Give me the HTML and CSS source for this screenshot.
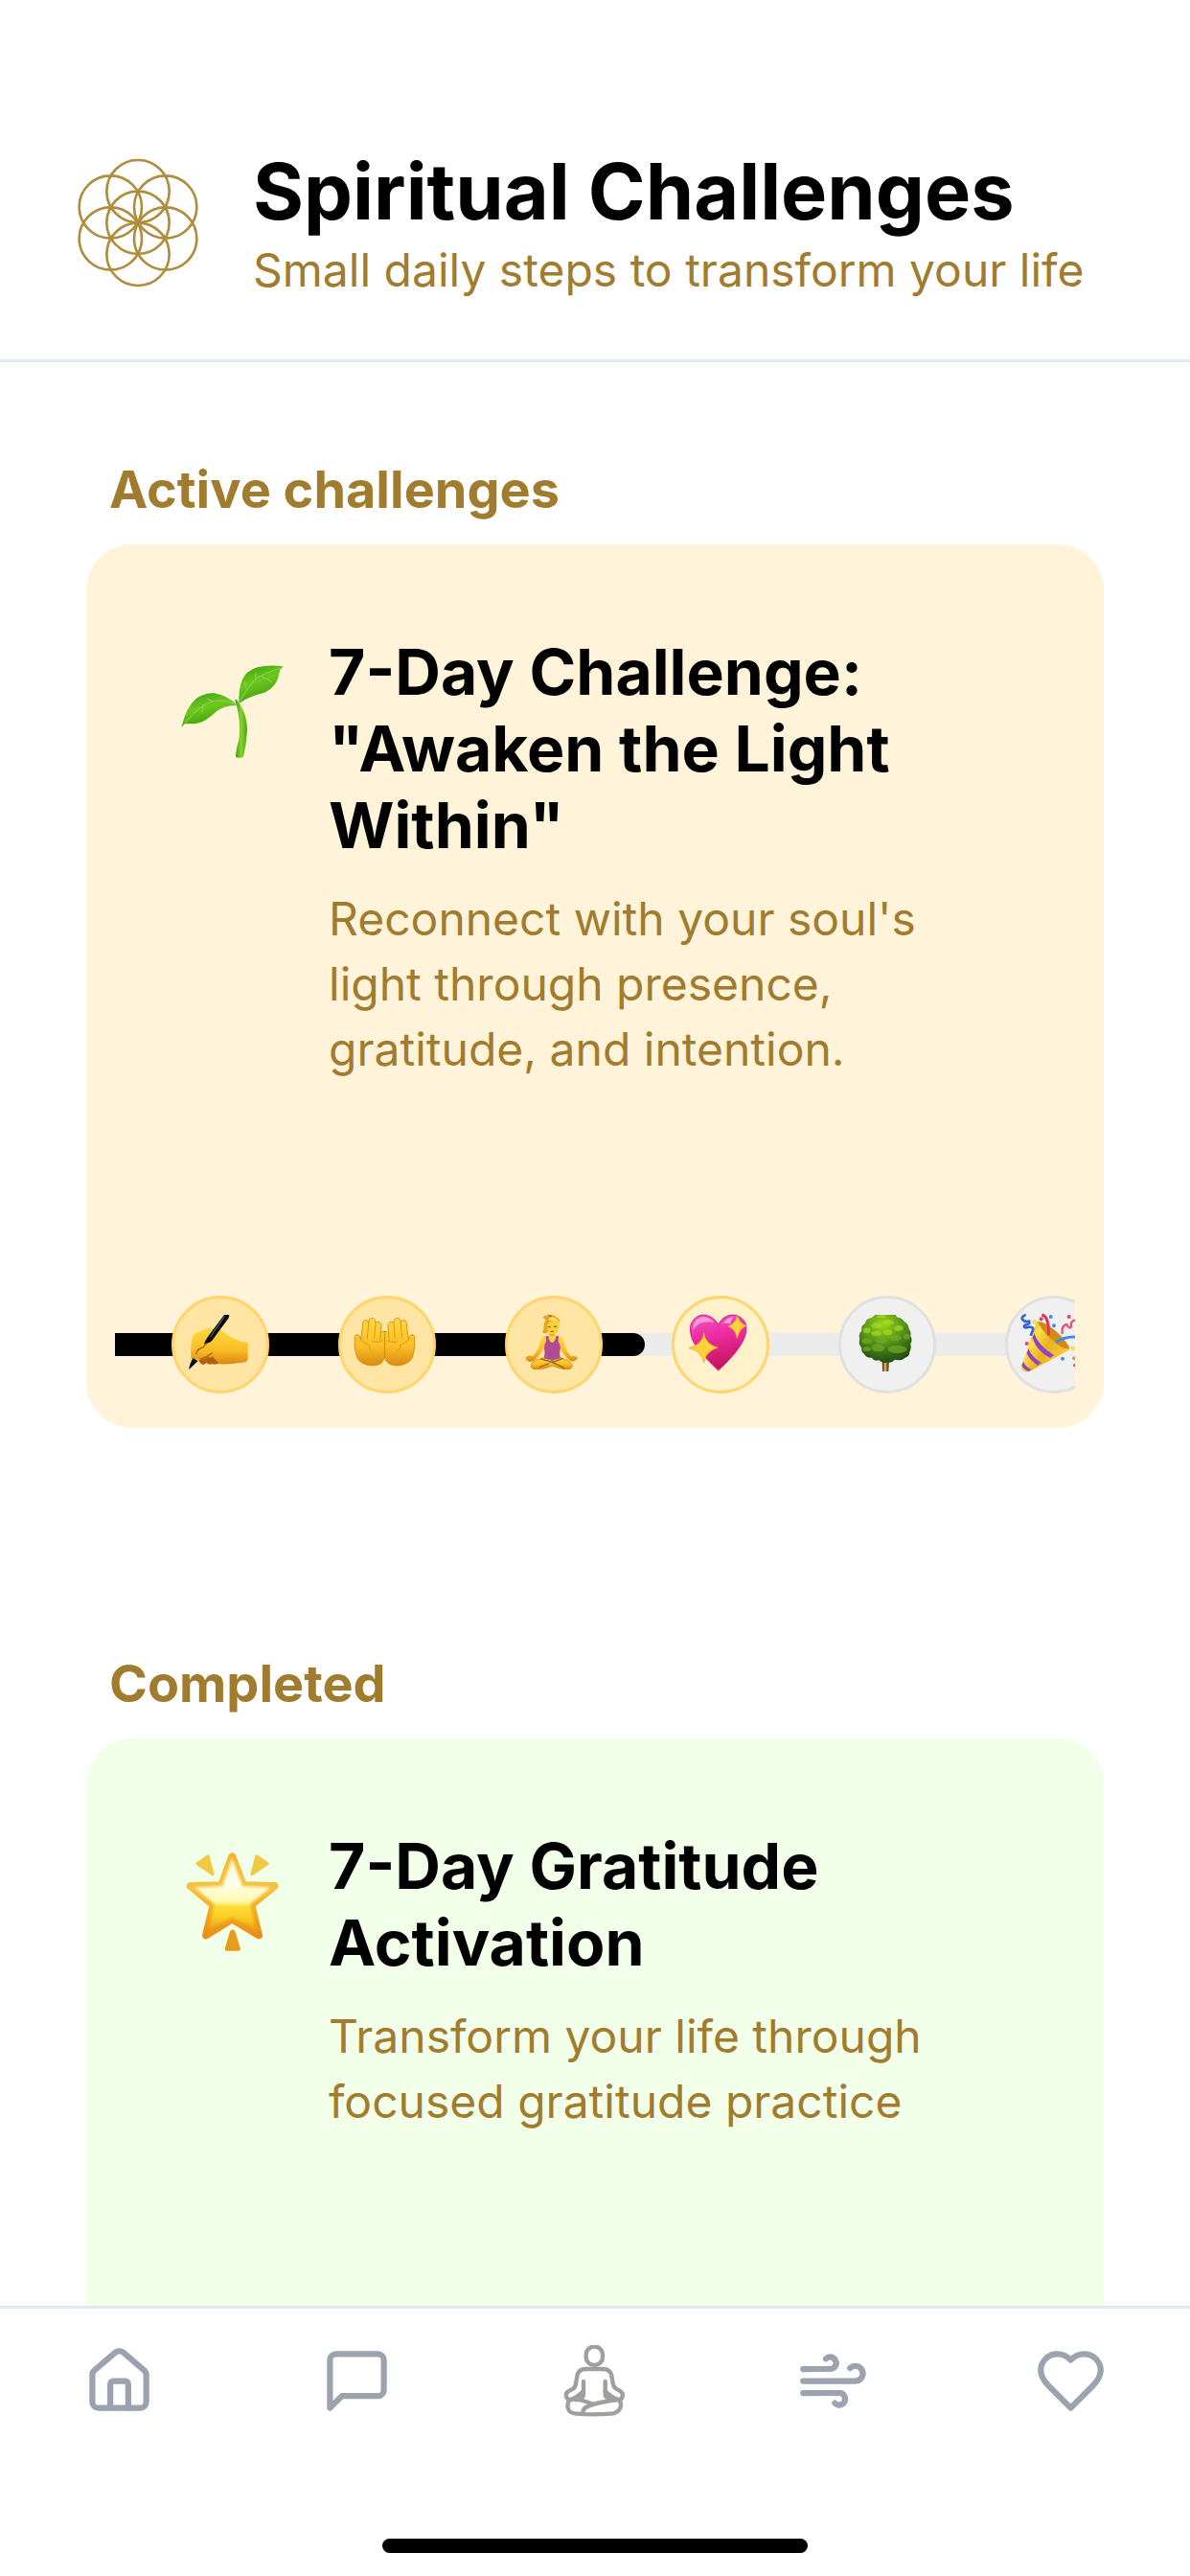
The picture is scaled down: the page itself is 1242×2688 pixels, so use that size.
FILE: index.html
```html
<!DOCTYPE html>
<html lang="en">
<head>
  <meta charset="UTF-8" />
  <meta name="viewport" content="width=device-width, initial-scale=1" />
  <title>Spiritual Challenges</title>
  <link rel="stylesheet" href="styles.css">
</head>
<body>
  <header class="header">
    <svg class="logo" viewBox="60 64 384 416" aria-hidden="true">
      <circle cx="252" cy="272" r="98" />
      <circle cx="252" cy="174" r="98" />
      <circle cx="252" cy="371" r="98" />
      <circle cx="166" cy="223" r="98" />
      <circle cx="338" cy="223" r="98" />
      <circle cx="166" cy="322" r="98" />
      <circle cx="338" cy="322" r="98" />
    </svg>
    <div class="header-text">
      <h1>Spiritual Challenges</h1>
      <p>Small daily steps to transform your life</p>
    </div>
  </header>

  <main class="content">
    <section>
      <h2>Active challenges</h2>
      <article class="card active">
        <div class="card-body">
          <!-- Seedling -->
          <svg class="card-icon" viewBox="48 45 342 342" aria-hidden="true">
            <defs>
              <linearGradient id="leaf" x1="0" y1="0" x2="0.4" y2="1">
                <stop offset="0" stop-color="#3f9d12" />
                <stop offset="0.5" stop-color="#6cc81c" />
                <stop offset="1" stop-color="#3f9a10" />
              </linearGradient>
              <linearGradient id="stem">
                <stop offset="0" stop-color="#3f960c" />
                <stop offset="0.5" stop-color="#83d42c" />
                <stop offset="1" stop-color="#4da512" />
              </linearGradient>
            </defs>
            <path fill="url(#stem)" d="M226 182Q230 176 234 184Q264 224 264 278Q261 320 252 359Q240 366 228 359Q228 340 238 306Q246 244 226 182Z" />
            <path fill="url(#leaf)" d="M58 268Q72 204 104 177Q132 157 162 160Q202 168 229 194L228 199Q194 198 169 216Q129 254 102 255Q78 256 68 256Z" />
            <path fill="url(#leaf)" d="M239 192Q234 126 264 95Q298 67 377 76L366 88Q360 140 318 158Q264 172 239 192Z" />
            <path class="vein" d="M226 195Q190 178 156 185Q112 200 70 252M122 220L126 195M156 185L138 177M242 184Q268 138 290 116Q316 98 366 82M290 116L291 98M262 146L255 123M310 108L342 125" />
          </svg>
          <div>
            <h3>7-Day Challenge: "Awaken the Light Within"</h3>
            <p>Reconnect with your soul's light through presence, gratitude, and intention.</p>
          </div>
        </div>

        <div class="track">
          <div class="track-fill"></div>
          <ol class="days">
            <!-- Writing hand -->
            <li class="day done">
              <svg viewBox="246 105 288 288" aria-hidden="true">
                <defs>
                  <linearGradient id="skin" x1="0" y1="0" x2="0" y2="1">
                    <stop offset="0" stop-color="#ffd840" />
                    <stop offset="0.6" stop-color="#fbbd25" />
                    <stop offset="1" stop-color="#d98a12" />
                  </linearGradient>
                </defs>
                <path fill="#b5620f" d="M318 280Q322 308 334 312Q344 312 346 306Q354 314 364 310Q376 314 388 307L420 300L400 270Z" />
                <path fill="url(#skin)" d="M298 288Q295 240 306 220Q326 202 356 198Q384 196 404 212Q438 240 476 243V298Q470 306 458 305Q420 312 386 310Q372 292 354 288Q330 300 314 294L310 300Q300 298 298 288Z" />
                <path fill="none" stroke="#a9620f" stroke-width="4" stroke-linecap="round" d="M314 278Q318 262 336 258L346 246M330 294Q352 286 364 276M330 294L338 308M348 290L360 306M364 288L380 305" />
                <path fill="#0a0a0e" d="M402 156L417 156Q419 160 415 167L363 238Q355 246 344 245L338 248Q346 232 350 226ZM304 292L320 300L292 327Q292 314 304 292Z" />
                <path fill="none" stroke="#6d7690" stroke-width="3" d="M402 162L358 226" />
              </svg>
            </li>
            <!-- Palms up together -->
            <li class="day done">
              <svg viewBox="768 105 288 288" aria-hidden="true">
                <g id="palm">
                  <path fill="url(#skin)" stroke="#d7920f" stroke-width="3" stroke-linejoin="round" d="M811 224Q813 216 822 219Q828 222 830 234L837 178Q841 170 849 174Q853 176 854 182L856 171Q861 164 870 167Q876 170 876 181Q880 176 888 179Q894 182 894 190L892 214Q896 206 904 208V290Q898 314 866 315Q836 314 820 294Q809 270 811 224Z" />
                  <path fill="none" stroke="#db9a15" stroke-width="3" stroke-linecap="round" d="M854 182L850 230M876 182L872 230M892 214L890 236M830 234Q832 240 858 252Q850 258 862 266M866 240Q886 244 898 238" />
                </g>
                <use href="#palm" transform="matrix(-1 0 0 1 1809 0)" />
              </svg>
            </li>
            <!-- Woman in lotus position -->
            <li class="day done">
              <svg viewBox="210 105 288 288" aria-hidden="true">
                <path fill="#e9a91c" d="M340 205H356V224H340Z" />
                <path fill="url(#skin)" d="M330 222Q317 224 313 236Q306 266 288 286Q274 280 266 290Q264 296 276 302Q290 306 298 294Q316 276 328 252H368Q380 276 398 294Q408 306 420 300Q430 294 428 288Q420 284 408 286Q390 266 384 236Q380 224 366 222Z" />
                <path fill="url(#skin)" stroke="#b87410" stroke-width="2" d="M322 290Q290 298 283 312Q282 324 294 326Q322 328 350 315Q380 328 400 326Q414 324 411 312Q404 298 374 290Z" />
                <path fill="none" stroke="#a7660d" stroke-width="4" stroke-linecap="round" d="M314 294Q348 302 386 322M382 293L354 303M338 309L310 319" />
                <path fill="#3c8fd0" d="M342 297L357 294L350 304Z" />
                <path fill="#b04c93" d="M329 222H337Q340 242 349 243Q358 242 361 222H369L368 240Q376 250 374 264Q370 280 375 292Q350 302 323 292Q328 276 324 262Q322 250 330 240Z" />
                <ellipse cx="349" cy="190" rx="22" ry="27" fill="#ffcf35" />
                <path fill="#e2a51d" d="M320 164Q326 154 348 156Q374 162 374 186Q372 176 358 172Q336 178 332 190Q336 204 334 213Q324 216 317 210Q324 206 322 196Q324 186 324 180Q334 174 320 164Z" />
                <path fill="#ffe25c" d="M340 166Q358 158 370 178Q354 170 338 174Z" />
                <path fill="none" stroke="#72460b" stroke-width="3" stroke-linecap="round" d="M336 193L343 195M355 194L362 192M345 208H352" />
                <path fill="#a65484" d="M336 157Q344 153 348 162L340 161Z" />
              </svg>
            </li>
            <!-- Sparkling heart -->
            <li class="day current">
              <svg viewBox="732 105 288 288" aria-hidden="true">
                <defs>
                  <linearGradient id="heart" x1="0" y1="0" x2="0.2" y2="1">
                    <stop offset="0" stop-color="#f25bbd" />
                    <stop offset="0.4" stop-color="#ee2ea6" />
                    <stop offset="1" stop-color="#c8145e" />
                  </linearGradient>
                </defs>
                <path fill="url(#heart)" stroke="#dc1590" stroke-width="3" d="M869 330Q812 276 792 242Q776 210 784 184Q796 158 822 156Q852 158 869 186Q884 158 914 156Q942 158 954 182Q962 210 944 242Q922 282 869 330Z" />
                <path fill="#fbb5e2" opacity=".75" d="M790 190Q796 166 822 162Q846 166 856 180Q840 176 820 180Q804 182 790 204ZM884 182Q896 164 916 162L906 184Z" />
                <path class="spark" d="M824 212Q829 248 868 259Q831 268 824 306Q817 269 777 260Q818 250 824 212ZM929 157Q933 182 957 190Q934 200 928 231Q923 200 899 192Q923 184 929 157Z" />
              </svg>
            </li>
            <!-- Tree -->
            <li class="day">
              <svg viewBox="174 105 288 288" aria-hidden="true">
                <defs>
                  <radialGradient id="crown" cx="0.45" cy="0.2" r="0.8">
                    <stop offset="0" stop-color="#9bd41b" />
                    <stop offset="0.5" stop-color="#57921a" />
                    <stop offset="1" stop-color="#1f4d13" />
                  </radialGradient>
                </defs>
                <path fill="#6a4a20" d="M302 296H324L322 333H303Z" />
                <path fill="#d2ac55" d="M308 304H316V333H308Z" />
                <path fill="url(#crown)" d="M280 156H344L350 164Q364 164 372 178Q384 184 386 200Q394 210 391 222Q399 236 391 246Q394 262 388 272Q388 286 374 290Q366 298 354 298L342 296Q332 308 318 304Q304 310 292 298Q276 302 270 290Q252 292 246 278Q236 272 238 260Q226 244 232 230Q226 216 238 206Q234 190 248 184Q252 166 268 166Z" />
                <g fill="#a5df20" opacity=".65">
                  <ellipse cx="284" cy="190" rx="16" ry="9" />
                  <ellipse cx="322" cy="180" rx="17" ry="9" />
                  <ellipse cx="300" cy="161" rx="14" ry="5" />
                  <ellipse cx="354" cy="198" rx="14" ry="9" />
                  <ellipse cx="284" cy="214" rx="16" ry="8" />
                  <ellipse cx="320" cy="211" rx="14" ry="9" />
                  <ellipse cx="254" cy="205" rx="11" ry="9" />
                </g>
                <g fill="#70ad20" opacity=".7">
                  <ellipse cx="254" cy="238" rx="16" ry="9" />
                  <ellipse cx="300" cy="236" rx="18" ry="9" />
                  <ellipse cx="345" cy="228" rx="17" ry="10" />
                  <ellipse cx="379" cy="224" rx="10" ry="9" />
                  <ellipse cx="289" cy="259" rx="20" ry="12" />
                  <ellipse cx="350" cy="264" rx="30" ry="12" />
                  <ellipse cx="254" cy="263" rx="12" ry="7" />
                </g>
              </svg>
            </li>
            <!-- Party popper -->
            <li class="day">
              <svg viewBox="696 105 288 288" aria-hidden="true">
                <defs>
                  <linearGradient id="cone" x1="0" y1="0" x2="1" y2="0.6">
                    <stop offset="0" stop-color="#c98a12" />
                    <stop offset="0.35" stop-color="#ffdf4a" />
                    <stop offset="0.6" stop-color="#eab020" />
                    <stop offset="1" stop-color="#f7cf3e" />
                  </linearGradient>
                </defs>
                <path fill="url(#cone)" d="M786 178Q796 172 820 188Q868 220 888 256Q892 266 882 269L764 333Q748 338 739 326Q737 318 740 312Z" />
                <path fill="#d48a17" d="M790 178Q806 176 838 200Q880 236 889 262Q868 268 832 232Q796 200 790 178Z" />
                <path fill="#8f44c4" d="M778 214Q792 254 840 282L828 291Q786 270 773 229ZM760 262Q772 290 800 306L789 314Q764 298 755 277ZM744 302Q752 320 770 327L760 333Q744 326 739 314Z" />
                <path fill="none" stroke="#e2315f" stroke-width="9" d="M802 156Q826 162 823 220" />
                <path fill="none" stroke="#3d8cf0" stroke-width="9" d="M846 243Q872 222 920 226" />
                <path fill="none" stroke="#3366d0" stroke-width="8" d="M752 156Q736 162 742 171Q750 180 762 176Q768 186 750 188Q742 194 752 196Q778 190 774 204L767 221" />
                <path fill="none" stroke="#e5567c" stroke-width="7" d="M867 216Q862 190 880 186Q888 202 894 194Q890 174 910 172" />
                <g fill="#3d8cf0"><circle cx="830" cy="162" r="6" /><circle cx="840" cy="190" r="6" /><circle cx="867" cy="293" r="6" /></g>
                <g fill="#e5406b"><circle cx="800" cy="169" r="6" /><circle cx="887" cy="162" r="6" /><circle cx="755" cy="246" r="6" /><circle cx="905" cy="314" r="5" /></g>
                <g fill="#f6e73d" stroke="#d9b91d" stroke-width="1"><circle cx="779" cy="178" r="6" /><circle cx="899" cy="261" r="6" /></g>
                <circle cx="903" cy="292" r="6" fill="#f39a23" />
              </svg>
            </li>
          </ol>
        </div>
      </article>
    </section>

    <section>
      <h2>Completed</h2>
      <article class="card completed">
        <div class="card-body">
          <!-- Glowing star -->
          <svg class="card-icon" viewBox="48 93 342 342" aria-hidden="true">
            <defs>
              <linearGradient id="star" x1="0" y1="0" x2="0" y2="1">
                <stop offset="0" stop-color="#f5b52a" />
                <stop offset="0.4" stop-color="#f4c343" />
                <stop offset="0.7" stop-color="#f3aa1c" />
                <stop offset="1" stop-color="#e8901a" />
              </linearGradient>
              <linearGradient id="shine" x1="0" y1="0" x2="0" y2="1">
                <stop offset="0" stop-color="#fff8d0" />
                <stop offset="0.35" stop-color="#fffef0" />
                <stop offset="0.63" stop-color="#fff9a8" />
                <stop offset="0.66" stop-color="#fbe23c" />
                <stop offset="0.85" stop-color="#f8ca22" />
                <stop offset="1" stop-color="#f0a51c" />
              </linearGradient>
              <filter id="soft"><feGaussianBlur stdDeviation="4" /></filter>
            </defs>
            <path fill="url(#star)" stroke="url(#star)" stroke-width="24" stroke-linejoin="round" d="M217 112L252 202L350 204L277 264L300 358L217 308L135 358L158 264L86 204L183 202Z" />
            <path fill="url(#shine)" filter="url(#soft)" d="M217 116L249 205L336 209L274 260L290 338L217 302L145 338L161 260L100 209L186 205Z" />
            <g fill="#efcb45" stroke="#efcb45" stroke-width="10" stroke-linejoin="round">
              <path d="M108 134L141 111L156 167Z" />
              <path d="M327 134L294 111L279 167Z" />
            </g>
            <path fill="#e99c1c" stroke="#e99c1c" stroke-width="10" stroke-linejoin="round" d="M214 349Q218 342 222 349L238 402H199Z" />
          </svg>
          <div>
            <h3>7-Day Gratitude Activation</h3>
            <p>Transform your life through focused gratitude practice</p>
          </div>
        </div>
      </article>
    </section>
  </main>

  <nav class="tabs">
    <a href="#home" aria-label="Home">
      <svg viewBox="0 0 24 24"><path d="M15 21v-8a1 1 0 0 0-1-1h-4a1 1 0 0 0-1 1v8" /><path d="M3 10a2 2 0 0 1 .709-1.528l7-5.999a2 2 0 0 1 2.582 0l7 5.999A2 2 0 0 1 21 10v9a2 2 0 0 1-2 2H5a2 2 0 0 1-2-2z" /></svg>
    </a>
    <a href="#chat" aria-label="Chat">
      <svg viewBox="0 0 24 24"><path d="M21 15a2 2 0 0 1-2 2H7l-4 4V5a2 2 0 0 1 2-2h14a2 2 0 0 1 2 2z" /></svg>
    </a>
    <a href="#meditate" aria-label="Meditate">
      <svg class="figure" viewBox="74 202 225 225">
        <rect x="160" y="207" width="52" height="58" rx="25" />
        <path d="M152 316V360Q146 370 130 374M220 316V360Q226 370 242 374" />
        <path d="M152 346Q132 366 110 374Q94 368 98 354Q102 346 118 340Q127 334 128 322L133 294Q138 278 158 277H214Q234 278 239 294L244 322Q246 334 256 340Q274 348 275 358Q274 372 262 374Q240 366 220 346" />
        <path d="M108 374Q98 390 106 406Q112 416 130 417Q186 422 246 416Q266 410 269 392Q270 378 260 373Q210 378 170 392Q150 398 150 414M108 375Q128 366 178 386L192 386" />
      </svg>
    </a>
    <a href="#breathe" aria-label="Breathe">
      <svg viewBox="0 0 24 24"><path d="M17.7 7.7a2.5 2.5 0 1 1 1.8 4.3H2" /><path d="M9.6 4.6A2 2 0 1 1 11 8H2" /><path d="M12.6 19.4A2 2 0 1 0 14 16H2" /></svg>
    </a>
    <a href="#favorites" aria-label="Favorites">
      <svg viewBox="0 0 24 24"><path d="M19 14c1.49-1.46 3-3.21 3-5.5A5.5 5.5 0 0 0 16.5 3c-1.76 0-3 .5-4.5 2-1.5-1.5-2.74-2-4.5-2A5.5 5.5 0 0 0 2 8.5c0 2.3 1.5 4.05 3 5.5l7 7Z" /></svg>
    </a>
    <div class="home-indicator"></div>
  </nav>
</body>
</html>
```
FILE: styles.css
```css
* {
  box-sizing: border-box;
}
body {
  margin: 0;
  height: 100vh;
  display: flex;
  flex-direction: column;
  font-family: Inter, sans-serif;
  background: #fff;
  color: #000;
}
h1, h2, h3, p {
  margin: 0;
}
p {
  font-size: 48px;
  color: #a17c2f;
}

/* Header */
.header {
  display: flex;
  align-items: center;
  gap: 56px;
  padding: 150px 80px 61px;
  border-bottom: 3px solid #e2e8f0;
}
.logo {
  width: 128px;
  flex-shrink: 0;
  fill: none;
  stroke: #b08c3e;
  stroke-width: 8;
}
h1 {
  font-size: 81px;
  line-height: 100px;
}
.header p {
  line-height: 64px;
}

/* Challenges */
.content {
  flex: 1;
  min-height: 0;
  overflow-y: auto;
  scrollbar-width: none;
  padding: 100px 90px 0;
}
section {
  margin-bottom: 234px;
}
h2 {
  font-size: 54px;
  line-height: 66px;
  padding: 0 24px;
  margin-bottom: 24px;
  color: #a17c2f;
}
.card {
  border-radius: 48px;
  padding: 93px 30px 36px;
}
.active {
  background: #fff4d9;
}
.completed {
  background: #f2ffe9;
  min-height: 922px;
}
.card-body {
  display: flex;
  gap: 43px;
  padding: 0 66px;
}
.card-icon {
  width: 114px;
  height: 114px;
  flex-shrink: 0;
  margin-top: 24px;
}
.vein {
  fill: none;
  stroke: #8fd860;
  stroke-width: 3;
}
h3 {
  font-size: 66px;
  line-height: 80px;
  margin-bottom: 24px;
}
.card p {
  line-height: 68px;
}

/* Day progress */
.track {
  display: grid;
  align-items: center;
  overflow: hidden;
  margin-top: 223px;
  background: linear-gradient(#ebebeb, #ebebeb) center / 100% 24px no-repeat;
}
.track-fill {
  grid-area: 1 / 1;
  width: 553px;
  height: 24px;
  border-radius: 0 12px 12px 0;
  background: #000;
}
.days {
  grid-area: 1 / 1;
  display: flex;
  gap: 72px;
  min-width: 0;
  margin: 0;
  padding: 0 0 0 59px;
  list-style: none;
}
.day {
  flex: 0 0 102px;
  height: 102px;
  border: 3px solid #e0e0e0;
  border-radius: 50%;
  background: #f0f0f0;
}
.day svg {
  display: block;
}
.done {
  border-color: #ffd56b;
  background: #ffe5a3;
}
.current {
  border-color: #ffd56b;
  background: #fff1c9;
}
.spark {
  fill: #ffd23c;
  stroke: #ef9a2a;
  stroke-width: 2;
}

/* Tab bar */
.tabs {
  display: grid;
  grid-template-columns: repeat(5, 1fr);
  justify-items: center;
  row-gap: 127px;
  padding: 38px 0 24px;
  border-top: 3px solid #e2e8f0;
  background: #fff;
}
.tabs a {
  height: 75px;
}
.tabs svg {
  width: 75px;
  height: 75px;
  fill: none;
  stroke: #9ca3af;
  stroke-width: 2;
  stroke-linecap: round;
  stroke-linejoin: round;
}
.tabs .figure {
  stroke: #a09f9e;
  stroke-width: 13;
}
.home-indicator {
  grid-column: 1 / -1;
  width: 444px;
  height: 15px;
  border-radius: 8px;
  background: #000;
}
```
